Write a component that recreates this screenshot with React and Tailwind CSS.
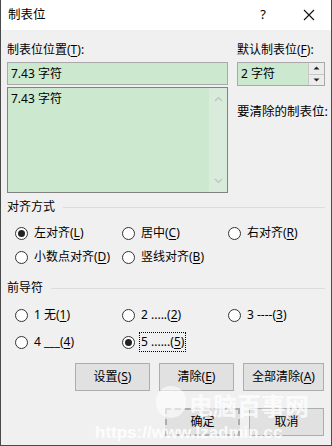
import React from "react";

const FONT = { fontFamily: '"Noto Sans", "Noto Sans CJK SC", sans-serif' };

const Radio = ({ checked, children, focus }) => (
  <div className="flex items-center h-[20px]">
    <span className="w-[13px] h-[13px] rounded-full border border-[#333] bg-white flex items-center justify-center shrink-0">
      {checked && <span className="w-[7px] h-[7px] rounded-full bg-[#222]" />}
    </span>
    <span
      className={
        "ml-[4px] leading-[18px] whitespace-nowrap px-[1px] " +
        (focus ? "border border-dotted border-black" : "border border-transparent")
      }
    >
      {children}
    </span>
  </div>
);

const U = ({ children }) => <span className="underline underline-offset-2">{children}</span>;

const GroupHeader = ({ title }) => (
  <div className="flex items-center h-[16px]">
    <span className="leading-[16px] whitespace-nowrap">{title}</span>
    <div className="flex-1 ml-[8px] h-px bg-[#dcdcdc]" />
  </div>
);

const Button = ({ children, className = "" }) => (
  <div
    className={
      "h-[28px] bg-[#e1e1e1] border border-[#adadad] flex items-center justify-center " + className
    }
  >
    {children}
  </div>
);

export default function App() {
  return (
    <div
      className="w-[332px] h-[446px] bg-[#f0f0f0] border-l border-r border-b border-[#4a4a4a] text-[12px] text-black relative overflow-hidden"
      style={FONT}
    >
      {/* Title bar */}
      <div className="h-[30px] bg-white flex items-center pl-[7px]">
        <span className="text-[12.5px]">制表位</span>
        <div className="flex-1" />
        <span className="text-[13px] mr-[37px]">?</span>
        <svg width="12" height="12" viewBox="0 0 12 12" className="mr-[16px]">
          <path d="M1 1 L11 11 M11 1 L1 11" stroke="#111" strokeWidth="1.1" />
        </svg>
      </div>

      <div className="px-[6px]">
        {/* Top section */}
        <div className="flex mt-[12px]">
          <div className="w-[223px]">
            <div className="leading-[16px]">
              制表位位置(<U>T</U>):
            </div>
            <div className="mt-[4px] h-[23px] bg-[#cce8cf] border border-[#a9a9a9] flex items-center pl-[3px]">
              7.43 字符
            </div>
            <div className="mt-[2px] h-[106px] bg-[#cce8cf] border border-[#828282] flex">
              <div className="flex-1 pl-[3px] pt-[3px] leading-[16px]">7.43 字符</div>
              <div className="w-[18px] bg-[#d9ecdb] flex flex-col items-center justify-between py-[8px]">
                <svg width="9" height="6" viewBox="0 0 9 6">
                  <path d="M1 5 L4.5 1.5 L8 5" stroke="#c0c0c0" strokeWidth="1.2" fill="none" />
                </svg>
                <svg width="9" height="6" viewBox="0 0 9 6">
                  <path d="M1 1 L4.5 4.5 L8 1" stroke="#c0c0c0" strokeWidth="1.2" fill="none" />
                </svg>
              </div>
            </div>
          </div>
          <div className="ml-[9px] w-[88px]">
            <div className="leading-[16px] whitespace-nowrap">
              默认制表位(<U>F</U>):
            </div>
            <div className="mt-[4px] h-[24px] bg-[#cce8cf] border border-[#a9a9a9] flex">
              <div className="flex-1 flex items-center pl-[3px]">2 字符</div>
              <div className="w-[16px] flex flex-col">
                <div className="flex-1 bg-[#ececec] border-l border-b border-[#c8c8c8] flex items-center justify-center">
                  <svg width="7" height="4" viewBox="0 0 7 4">
                    <path d="M0.5 3.5 L3.5 0.5 L6.5 3.5 Z" fill="#222" />
                  </svg>
                </div>
                <div className="flex-1 bg-[#ececec] border-l border-[#c8c8c8] flex items-center justify-center">
                  <svg width="7" height="4" viewBox="0 0 7 4">
                    <path d="M0.5 0.5 L3.5 3.5 L6.5 0.5 Z" fill="#222" />
                  </svg>
                </div>
              </div>
            </div>
            <div className="mt-[18px] leading-[16px] whitespace-nowrap text-[12.5px]">要清除的制表位:</div>
          </div>
        </div>

        {/* Alignment */}
        <div className="mt-[6px]">
          <GroupHeader title="对齐方式" />
          <div className="grid grid-cols-[107px_106px_1fr] pl-[8px] mt-[8px] gap-y-[4px]">
            <Radio checked>左对齐(<U>L</U>)</Radio>
            <Radio>居中(<U>C</U>)</Radio>
            <Radio>右对齐(<U>R</U>)</Radio>
            <Radio>小数点对齐(<U>D</U>)</Radio>
            <Radio>竖线对齐(<U>B</U>)</Radio>
          </div>
        </div>

        {/* Leader */}
        <div className="mt-[13px]">
          <GroupHeader title="前导符" />
          <div className="grid grid-cols-[107px_106px_1fr] pl-[8px] mt-[9px] gap-y-[7px]">
            <Radio>1 无(<U>1</U>)</Radio>
            <Radio>2 .....(<U>2</U>)</Radio>
            <Radio>3 ----(<U>3</U>)</Radio>
            <Radio>4 ___(<U>4</U>)</Radio>
            <Radio checked focus>5 ......(<U>5</U>)</Radio>
          </div>
        </div>

        {/* Buttons */}
        <div className="flex justify-end gap-[9px] mt-[11px] pr-[1px]">
          <Button className="w-[75px]">设置(<U>S</U>)</Button>
          <Button className="w-[75px]">清除(<U>E</U>)</Button>
          <Button className="w-[81px]">全部清除(<U>A</U>)</Button>
        </div>
        <div className="flex justify-end gap-[9px] mt-[17px] pr-[1px]">
          <Button className="w-[75px] border-2 border-dashed border-[#0a64c8]">确定</Button>
          <Button className="w-[75px]">取消</Button>
        </div>
      </div>

      {/* Watermark */}
      <div className="absolute left-[155px] top-[386px] w-[30px] h-[32px] rounded-full bg-white/60" />
      <div
        className="absolute left-[188px] top-[393px] text-[24px] font-bold text-white/75 leading-none whitespace-nowrap"
        style={{ fontFamily: '"Noto Sans CJK SC", sans-serif' }}
      >
        电脑百事网
      </div>
      <div
        className="absolute left-[94px] top-[424px] text-[17px] font-bold text-white/80 leading-none whitespace-nowrap"
        style={{ fontFamily: '"Liberation Sans", sans-serif' }}
      >
        https://www.lzadmin.cc
      </div>
    </div>
  );
}
